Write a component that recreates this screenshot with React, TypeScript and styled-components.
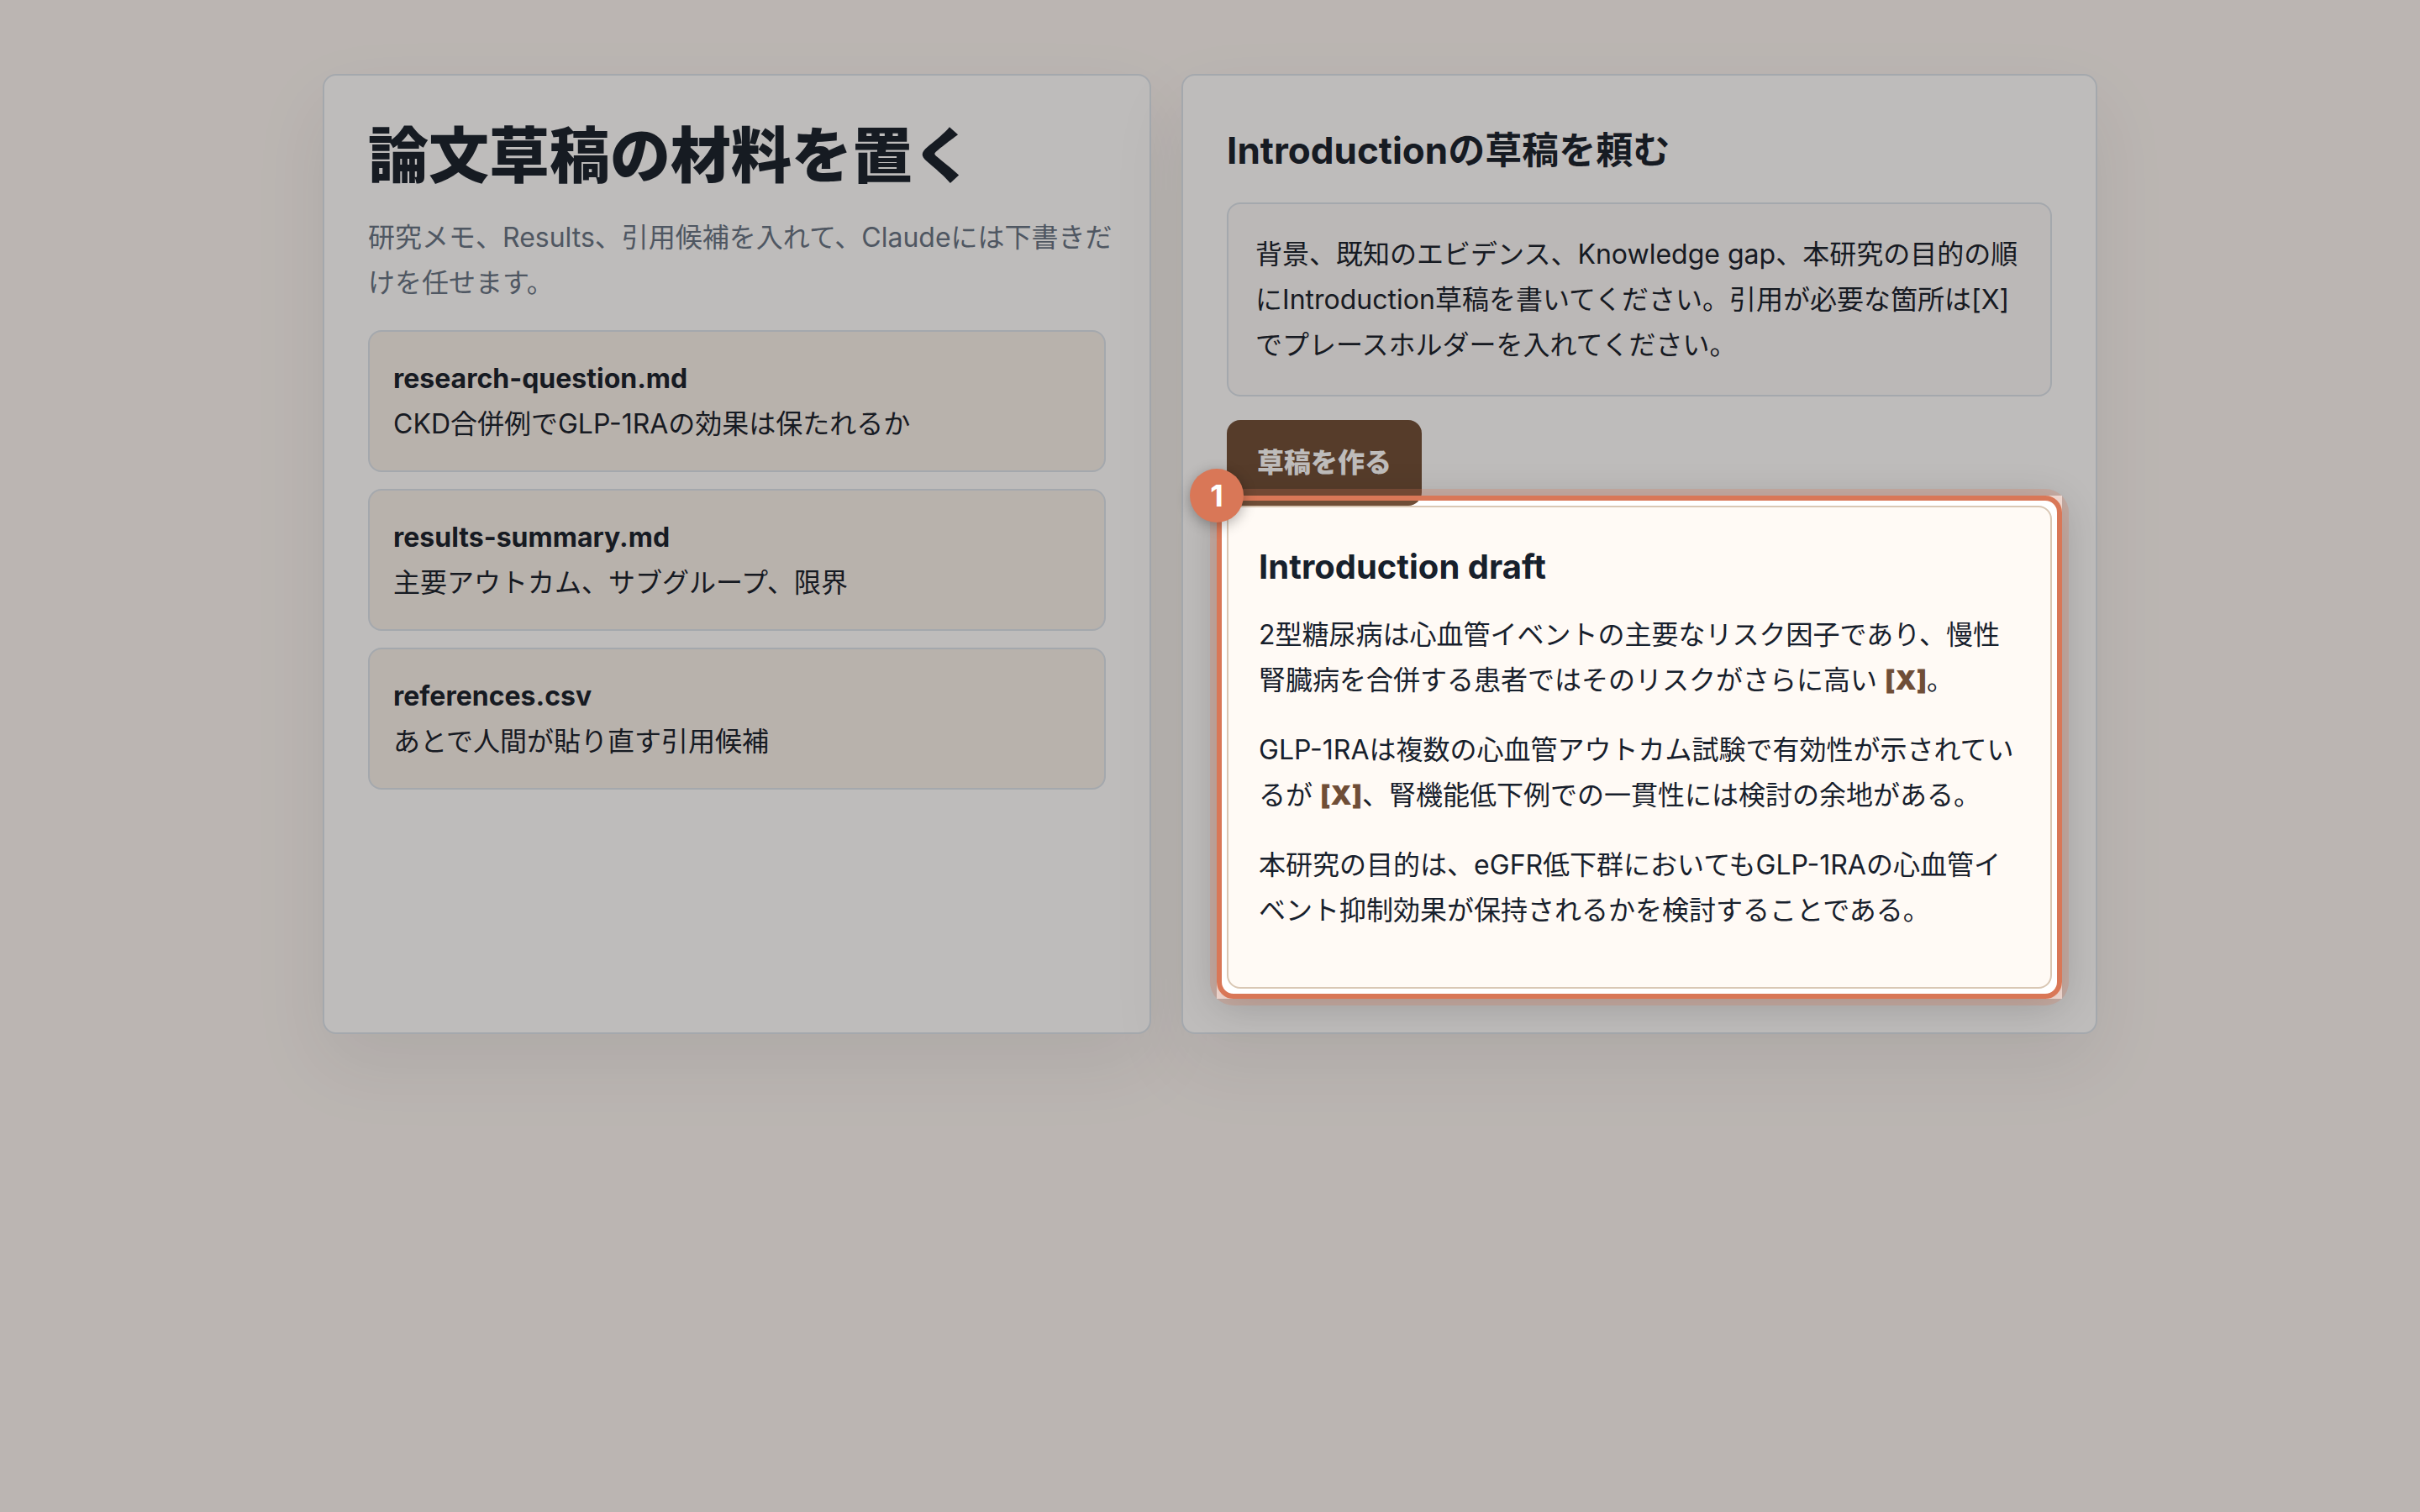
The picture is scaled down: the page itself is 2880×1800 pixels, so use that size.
import React from "react";
import styled, { createGlobalStyle } from "styled-components";

const GlobalStyle = createGlobalStyle`
  * { box-sizing: border-box; }
  body {
    margin: 0;
    background: #fbf6f3;
    color: #17202c;
    font-family: Inter, "Noto Sans CJK JP", sans-serif;
    font-size: 32px;
    line-height: 54px;
  }
`;

const Page = styled.main`
  display: grid;
  grid-template-columns: minmax(0, 95fr) minmax(0, 105fr);
  align-content: start;
  gap: 36px;
  max-width: 2240px;
  min-height: 100vh;
  margin: 0 auto;
  padding: 88px 64px;
`;

const Card = styled.section`
  padding: 52px;
  background: #ffffff;
  border: 2px solid #dce4ec;
  border-radius: 16px;
  box-shadow: 0 36px 90px rgba(31, 41, 51, 0.08);
`;

const Title = styled.h1`
  margin: 0 0 28px;
  font-size: 72px;
  line-height: 86px;
  font-weight: 900;
`;

const Lead = styled.p`
  margin: 0 0 29px;
  color: #667384;
  white-space: nowrap;
`;

const FileList = styled.ul`
  display: grid;
  gap: 20px;
  margin: 0;
  padding: 0;
  list-style: none;
`;

const FileItem = styled.li`
  padding: 29px 28px 28px;
  background: #f7f1eb;
  border: 2px solid #dce4ec;
  border-radius: 16px;
`;

const FileName = styled.strong`
  display: block;
  font-weight: 700;
`;

const SectionTitle = styled.h2`
  margin: 0 0 24px;
  font-size: 44px;
  line-height: 75px;
  font-weight: 700;
`;

const Prompt = styled.p`
  margin: 0 0 28px;
  padding: 33px 32px 32px;
  background: #fbfafa;
  border: 2px solid #dce4ec;
  border-radius: 16px;
`;

const RunButton = styled.button`
  display: block;
  padding: 24px 36px;
  border: 0;
  border-radius: 16px;
  background: #6f4e37;
  color: #ffffff;
  font: inherit;
  font-weight: 900;
`;

const Draft = styled.article`
  position: relative;
  padding: 37px 36px 35px;
  background: #fffaf5;
  border: 2px solid #d9c7b4;
  border-radius: 16px;
`;

const DraftTitle = styled.h3`
  margin: 0 0 20px;
  font-size: 40px;
  line-height: 68px;
  font-weight: 700;
`;

const Paragraph = styled.p`
  margin: 0 0 29px;
`;

const Citation = styled.span`
  color: #6f4e37;
  font-weight: 900;
`;

const Backdrop = styled.div`
  position: absolute;
  inset: -14px;
  box-shadow: 0 0 0 9999px rgba(20, 14, 10, 0.28);
  pointer-events: none;
`;

const Ring = styled.div`
  position: absolute;
  inset: -14px;
  border: 6px solid #d97757;
  border-radius: 20px;
  box-shadow: 0 0 0 8px rgba(217, 119, 87, 0.25), 0 8px 48px rgba(0, 0, 0, 0.18);
  pointer-events: none;
`;

const Step = styled.span`
  position: absolute;
  top: -46px;
  left: -46px;
  display: grid;
  place-items: center;
  width: 64px;
  height: 64px;
  border-radius: 50%;
  background: #d97757;
  box-shadow: 0 4px 16px rgba(0, 0, 0, 0.3);
  color: #ffffff;
  font-size: 36px;
  font-weight: 700;
`;

const files = [
  { name: "research-question.md", note: "CKD合併例でGLP-1RAの効果は保たれるか" },
  { name: "results-summary.md", note: "主要アウトカム、サブグループ、限界" },
  { name: "references.csv", note: "あとで人間が貼り直す引用候補" },
];

export default function App() {
  return (
    <>
      <GlobalStyle />
      <Page lang="ja">
        <Card>
          <Title>論文草稿の材料を置く</Title>
          <Lead>
            研究メモ、Results、引用候補を入れて、Claudeには下書きだ
            <br />
            けを任せます。
          </Lead>
          <FileList>
            {files.map((file) => (
              <FileItem key={file.name}>
                <FileName>{file.name}</FileName>
                {file.note}
              </FileItem>
            ))}
          </FileList>
        </Card>
        <Card>
          <SectionTitle>Introductionの草稿を頼む</SectionTitle>
          <Prompt>
            背景、既知のエビデンス、Knowledge gap、本研究の目的の順にIntroduction草稿を書いてください。引用が必要な箇所は[X]でプレースホルダーを入れてください。
          </Prompt>
          <RunButton type="button">草稿を作る</RunButton>
          <Draft>
            <DraftTitle>Introduction draft</DraftTitle>
            <Paragraph>
              2型糖尿病は心血管イベントの主要なリスク因子であり、慢性腎臓病を合併する患者ではそのリスクがさらに高い <Citation>[X]</Citation>。
            </Paragraph>
            <Paragraph>
              GLP-1RAは複数の心血管アウトカム試験で有効性が示されているが <Citation>[X]</Citation>、腎機能低下例での一貫性には検討の余地がある。
            </Paragraph>
            <Paragraph>
              本研究の目的は、eGFR低下群においてもGLP-1RAの心血管イベント抑制効果が保持されるかを検討することである。
            </Paragraph>
            <Backdrop />
            <Ring />
            <Step>1</Step>
          </Draft>
        </Card>
      </Page>
    </>
  );
}
